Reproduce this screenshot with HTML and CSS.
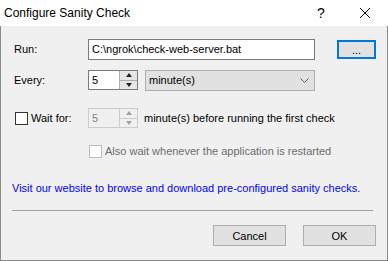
FILE: index.html
```html
<!DOCTYPE html>
<html lang="en">
<head>
  <meta charset="UTF-8" />
  <title>Configure Sanity Check</title>
  <link rel="stylesheet" href="styles.css">
</head>
<body>
  <div class="window">
    <div class="titlebar">
      <span class="title">Configure Sanity Check</span>
      <span class="help">?</span>
      <span class="close">
        <svg width="10" height="10" viewBox="0 0 10 10"><path d="M0 0 L10 10 M10 0 L0 10" stroke="#000" stroke-width="1" fill="none"/></svg>
      </span>
    </div>

    <div class="dialog">
      <div class="row row-run">
        <label class="lbl">Run:</label>
        <div class="textbox path">C:\ngrok\check-web-server.bat</div>
        <button class="btn browse">...</button>
      </div>

      <div class="row row-every">
        <label class="lbl">Every:</label>
        <div class="spin">
          <span class="spin-val">5</span>
          <span class="spin-btns">
            <span class="arrow up"></span>
            <span class="arrow down"></span>
          </span>
        </div>
        <div class="combo">
          <span>minute(s)</span>
          <svg width="9" height="6" viewBox="0 0 9 6"><path d="M0.5 0.5 L4.5 4.5 L8.5 0.5" stroke="#606060" stroke-width="1" fill="none"/></svg>
        </div>
      </div>

      <div class="row row-wait">
        <label class="lbl check"><span class="box"></span>Wait for:</label>
        <div class="spin disabled">
          <span class="spin-val">5</span>
          <span class="spin-btns">
            <span class="arrow up"></span>
            <span class="arrow down"></span>
          </span>
        </div>
        <span class="after">minute(s) before running the first check</span>
      </div>

      <div class="row row-also">
        <span class="box off"></span>
        <span class="muted">Also wait whenever the application is restarted</span>
      </div>

      <a class="link" href="#">Visit our website to browse and download pre-configured sanity checks.</a>

      <div class="sep"></div>

      <div class="actions">
        <button class="btn">Cancel</button>
        <button class="btn">OK</button>
      </div>
    </div>
  </div>
</body>
</html>
```

FILE: styles.css
```css
body {
  margin: 0;
  font-family: 'Liberation Sans', Arial, sans-serif;
  font-size: 11px;
  line-height: 15px;
  color: #000;
}

.window {
  width: 388px;
  height: 261px;
  display: flex;
  flex-direction: column;
  background-color: #ffffff;
  overflow: hidden;
}

.titlebar {
  height: 26px;
  flex-shrink: 0;
  display: flex;
  align-items: center;
  padding-left: 4px;
  background-color: #ffffff;
}

.title {
  flex: 1;
  font-size: 12px;
}

.help {
  width: 14px;
  margin-right: 29px;
  font-size: 14px;
}

.close {
  display: flex;
  margin-right: 18px;
}

.dialog {
  flex: 1;
  min-height: 0;
  background-color: #f0f0f0;
  border: 1px solid #8a8a8a;
  border-top: none;
  padding-left: 11px;
}

.row {
  display: flex;
  align-items: center;
}

.lbl {
  width: 76px;
  padding-left: 2px;
  box-sizing: border-box;
}

.row-run {
  margin-top: 13px;
  height: 21px;
}

.textbox {
  height: 21px;
  box-sizing: border-box;
  border: 1px solid #7a7a7a;
  background-color: #ffffff;
  display: flex;
  align-items: center;
  padding-left: 3px;
}

.path {
  width: 227px;
}

.btn {
  font-family: inherit;
  font-size: 11px;
  background-color: #e1e1e1;
  border: 1px solid #adadad;
  padding: 0;
  height: 21px;
  box-sizing: border-box;
  color: #000;
}

.browse {
  width: 39px;
  height: 19px;
  margin-left: 22px;
  border: 2px solid #0078d7;
  line-height: 12px;
}

.row-every {
  margin-top: 10px;
  align-items: flex-start;
  height: 22px;
}

.row-every .lbl {
  line-height: 20px;
}

.spin {
  width: 50px;
  height: 20px;
  box-sizing: border-box;
  border: 1px solid #7a7a7a;
  background-color: #ffffff;
  display: flex;
}

.spin-val {
  flex: 1;
  display: flex;
  align-items: center;
  padding-left: 3px;
}

.spin-btns {
  width: 17px;
  display: flex;
  flex-direction: column;
  background-color: #e6e6e6;
  border-left: 1px solid #adadad;
}

.arrow {
  flex: 1;
  display: flex;
  align-items: center;
  justify-content: center;
}

.arrow.up {
  border-bottom: 1px solid #adadad;
}

.arrow.up::before {
  content: "";
  border-left: 3px solid transparent;
  border-right: 3px solid transparent;
  border-bottom: 4px solid #222;
}

.arrow.down::before {
  content: "";
  border-left: 3px solid transparent;
  border-right: 3px solid transparent;
  border-top: 4px solid #222;
}

.spin.disabled {
  border-color: #cccccc;
  background-color: #f0f0f0;
  color: #838383;
}

.spin.disabled .spin-btns {
  background-color: #f0f0f0;
  border-left-color: #cccccc;
}

.spin.disabled .arrow.up {
  border-bottom-color: #cccccc;
}

.spin.disabled .arrow.up::before {
  border-bottom-color: #a0a0a0;
}

.spin.disabled .arrow.down::before {
  border-top-color: #a0a0a0;
}

.combo {
  width: 170px;
  height: 21px;
  box-sizing: border-box;
  margin-left: 7px;
  background-color: #e1e1e1;
  border: 1px solid #adadad;
  display: flex;
  align-items: center;
  justify-content: space-between;
  padding: 0 5px 0 3px;
}

.row-wait {
  margin-top: 16px;
  height: 20px;
}

.check {
  display: flex;
  align-items: center;
  padding-left: 3px;
}

.box {
  width: 13px;
  height: 13px;
  box-sizing: border-box;
  border: 1px solid #333333;
  background-color: #ffffff;
  margin-right: 3px;
}

.after {
  margin-left: 6px;
}

.row-also {
  margin-top: 16px;
  padding-left: 77px;
}

.box.off {
  border-color: #bcbcbc;
}

.muted {
  color: #6d6d6d;
}

.link {
  display: block;
  margin-top: 22px;
  color: #0000ff;
  text-decoration: none;
}

.sep {
  width: 361px;
  height: 1px;
  margin-top: 14px;
  background-color: #a0a0a0;
}

.actions {
  display: flex;
  justify-content: flex-end;
  gap: 17px;
  margin-top: 14px;
  padding-right: 11px;
}

.actions .btn {
  width: 73px;
}
```
